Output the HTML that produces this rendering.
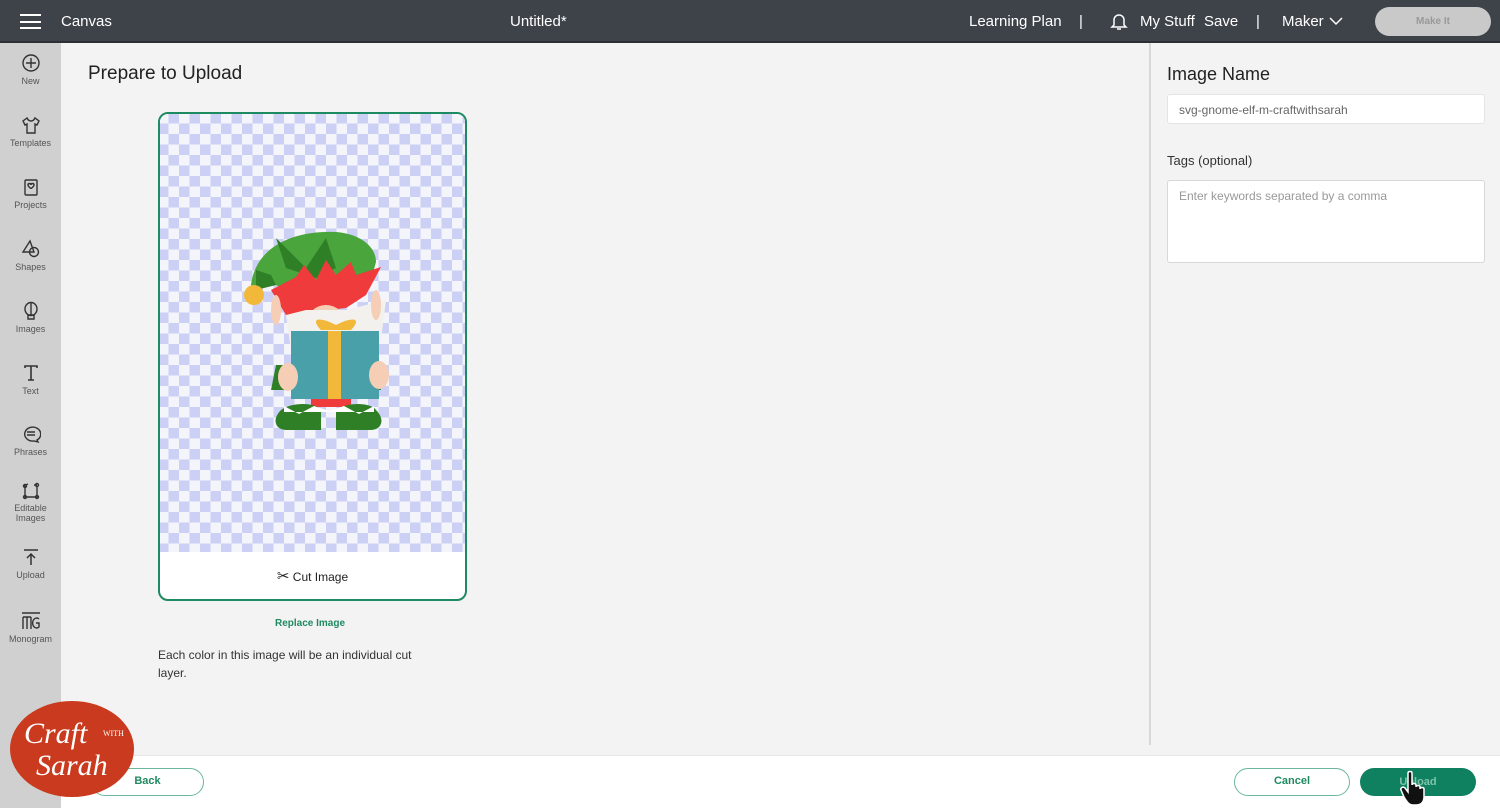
<!DOCTYPE html>
<html><head><meta charset="utf-8"><style>
*{margin:0;padding:0;box-sizing:border-box}
body{width:1500px;height:808px;overflow:hidden;background:#f3f3f3;font-family:"Liberation Sans",sans-serif;position:relative;color:#222}
.top{position:absolute;left:0;top:0;width:1500px;height:43px;background:#3e4249;border-bottom:2px solid #2c2f35;color:#fff;font-size:15px}
.top span{position:absolute;top:13px}
.side{position:absolute;left:0;top:43px;width:61px;height:765px;background:#d0d0d0}
.si{position:absolute;left:0;width:61px;text-align:center;font-size:9px;color:#555}
.si svg{display:block;margin:0 auto 3px}
.right{position:absolute;left:1149px;top:43px;width:351px;height:702px;border-left:2px solid #d8d8d8}
.bottom{position:absolute;left:61px;top:755px;width:1439px;height:53px;background:#fff;border-top:1px solid #e6e6e6}
.btn{position:absolute;height:28px;border-radius:14px;font-size:11px;font-weight:bold;text-align:center;line-height:25px}
</style></head><body>
<div class="top">
<div style="position:absolute;left:20px;top:14px;width:21px;height:15px;border-top:2px solid #fff;border-bottom:2px solid #fff"><div style="margin-top:4.5px;height:2px;background:#fff"></div></div>
<span style="left:61px">Canvas</span>
<span style="left:510px">Untitled*</span>
<span style="left:969px">Learning Plan</span>
<span style="left:1079px">|</span>
<svg style="position:absolute;left:1110px;top:12px" width="18" height="19" viewBox="0 0 18 19" fill="none" stroke="#fff" stroke-width="1.5"><path d="M4 13V8a5 5 0 0 1 10 0v5l2 2H2z"/><path d="M7 17h4"/></svg>
<span style="left:1140px">My Stuff</span>
<span style="left:1204px">Save</span>
<span style="left:1256px">|</span>
<span style="left:1282px">Maker</span>
<svg style="position:absolute;left:1329px;top:17px" width="14" height="9" viewBox="0 0 14 9" fill="none" stroke="#fff" stroke-width="1.5"><path d="M1 1l6 6 6-6"/></svg>
<div style="position:absolute;left:1375px;top:7px;width:116px;height:29px;border-radius:15px;background:#c9c9c9;color:#999;font-size:10px;font-weight:bold;text-align:center;line-height:29px">Make It</div>
</div>
<div class="side">
<div class="si" style="top:10px"><svg width="20" height="20" viewBox="0 0 20 20" fill="none" stroke="#333" stroke-width="1.4"><circle cx="10" cy="10" r="8"/><path d="M10 5v10M5 10h10"/></svg>New</div>
<div class="si" style="top:72px"><svg width="20" height="20" viewBox="0 0 20 20" fill="none" stroke="#333" stroke-width="1.4"><path d="M6 3l-4 3 2 4 2-1v9h8V9l2 1 2-4-4-3c-1 2-2 3-4 3S7 5 6 3z"/></svg>Templates</div>
<div class="si" style="top:134px"><svg width="20" height="20" viewBox="0 0 20 20" fill="none" stroke="#333" stroke-width="1.4"><rect x="4" y="3" width="12" height="15" rx="1"/><path d="M7 8c0-2 3-2 3 0 0-2 3-2 3 0 0 2-3 3-3 4-0-1-3-2-3-4z"/></svg>Projects</div>
<div class="si" style="top:196px"><svg width="20" height="20" viewBox="0 0 20 20" fill="none" stroke="#333" stroke-width="1.4"><path d="M9 2L2 13h11z"/><circle cx="13" cy="13" r="4.5"/></svg>Shapes</div>
<div class="si" style="top:258px"><svg width="20" height="20" viewBox="0 0 20 20" fill="none" stroke="#333" stroke-width="1.4"><ellipse cx="10" cy="8" rx="6" ry="6.5"/><path d="M10 1.5v13M7 14h6v4H7z"/></svg>Images</div>
<div class="si" style="top:320px"><svg width="20" height="20" viewBox="0 0 20 20" fill="none" stroke="#333" stroke-width="1.6"><path d="M4 5V3h12v2M10 3v14M7 17h6"/></svg>Text</div>
<div class="si" style="top:381px"><svg width="20" height="20" viewBox="0 0 20 20" fill="none" stroke="#333" stroke-width="1.4"><path d="M16 16l1 2-4-1A8 7 0 1 1 16 16z"/><path d="M6 8h8M6 11h8"/></svg>Phrases</div>
<div class="si" style="top:437px"><svg width="20" height="20" viewBox="0 0 20 20" fill="none" stroke="#333" stroke-width="1.4"><path d="M4 6v11h12V6M2 6l5-2M13 5h3"/><circle cx="4" cy="6" r="1.5"/><circle cx="16" cy="5" r="1.5"/><circle cx="4" cy="17" r="1.5"/><circle cx="16" cy="17" r="1.5"/></svg>Editable<br>Images</div>
<div class="si" style="top:504px"><svg width="20" height="20" viewBox="0 0 20 20" fill="none" stroke="#333" stroke-width="1.5"><path d="M3 3h14M10 18V7M6 11l4-4 4 4"/></svg>Upload</div>
<div class="si" style="top:568px"><svg width="22" height="20" viewBox="0 0 22 20" fill="none" stroke="#333" stroke-width="1.4"><path d="M2 2h18M3 18V6M7 18V6M11 18V6M3 6h8M19 8a4 5 0 1 0 0 8v-4h-3"/></svg>Monogram</div>
</div>

<div style="position:absolute;left:88px;top:63px;font-size:19px;color:#222">Prepare to Upload</div>
<div style="position:absolute;left:158px;top:112px;width:309px;height:489px;border:2px solid #1e8a62;border-radius:10px;background:#fff;overflow:hidden">
<div style="position:absolute;left:0;top:0;width:305px;height:438px;background-color:#f4f4fb;background-image:conic-gradient(#ccd0f4 25%,transparent 0 50%,#ccd0f4 0 75%,transparent 0);background-size:21px 21px;background-position:-2px -1px"></div>
<svg style="position:absolute;left:76px;top:116px" width="160" height="210" viewBox="0 0 160 210">
<path d="M15 55C20 15 60 0 100 2c25 2 40 15 40 30L135 50 60 65 30 50 20 60z" fill="#4aa53d"/>
<path d="M40 8l30 30 20-30 10 30-20 10-30-10zM20 40l15 5 5 10-20 5z" fill="#2f7f27"/>
<circle cx="18" cy="65" r="10" fill="#f1b83a"/>
<path d="M48 55L55 67 35 60 55 90 80 70 70 55z" fill="#ef3b3b"/>
<path d="M35 60L60 47 68 35 80 50 90 30 100 45 115 32 120 45 145 37 130 65 110 78 50 85z" fill="#ef3b3b"/>
<ellipse cx="90" cy="95" rx="20" ry="20" fill="#f6cdb5"/>
<path d="M50 85l20-5 40 0 40-10-5 40-40 20-50-10z" fill="#f3f1ee"/>
<ellipse cx="40" cy="80" rx="5" ry="15" fill="#f6cdb5"/><ellipse cx="140" cy="75" rx="5" ry="15" fill="#f6cdb5"/>
<path d="M40 135h20l5 25H35zM120 135h20l5 25h-30z" fill="#2f7f27"/>
<rect x="55" y="101" width="88" height="68" fill="#4aa0a8"/>
<rect x="92" y="101" width="13" height="68" fill="#f1b83a"/>
<path d="M85 100c-10-10-5-15 15-5 20-10 25-5 15 5z" fill="#f1b83a"/>
<ellipse cx="52" cy="147" rx="10" ry="14" fill="#f6cdb5"/><ellipse cx="143" cy="145" rx="10" ry="14" fill="#f6cdb5"/>
<rect x="75" y="169" width="40" height="8" fill="#ef3b3b"/>
<path d="M45 180c10-8 35-8 40 0v20H50c-10 0-15-10-5-20zM100 180c10-8 35-8 40 0 10 10 5 20-5 20h-35z" fill="#2f7f27"/>
<path d="M48 176l15 8 15-8 15 5 15-5 15 8 15-8v6H48z" fill="#fff"/>
</svg>
<div style="position:absolute;left:0;top:438px;width:305px;height:49px;text-align:center;line-height:49px;font-size:12px;color:#222"><span style="font-size:15px">✂</span> Cut Image</div>
</div>
<div style="position:absolute;left:275px;top:618px;font-size:10px;font-weight:bold;color:#1e8a62">Replace Image</div>
<div style="position:absolute;left:158px;top:646px;width:285px;font-size:12px;line-height:18px;color:#333">Each color in this image will be an individual cut layer.</div>

<div class="right">
<div style="position:absolute;left:16px;top:21px;font-size:18px;color:#222">Image Name</div>
<div style="position:absolute;left:16px;top:51px;width:318px;height:30px;background:#fff;border:1px solid #e4e4e4;border-radius:3px;font-size:12px;color:#666;padding:8px 11px">svg-gnome-elf-m-craftwithsarah</div>
<div style="position:absolute;left:16px;top:110px;font-size:13px;color:#333">Tags (optional)</div>
<div style="position:absolute;left:16px;top:137px;width:318px;height:83px;background:#fff;border:1px solid #d8d8d8;border-radius:3px;font-size:12px;color:#999;padding:8px 11px">Enter keywords separated by a comma</div>
</div>

<div class="bottom">
<div class="btn" style="left:30px;top:12px;width:113px;border:1.5px solid #6bb79b;color:#1e8a62">Back</div>
<div class="btn" style="left:1173px;top:12px;width:116px;border:1.5px solid #6bb79b;color:#1e8a62">Cancel</div>
<div class="btn" style="left:1299px;top:12px;width:116px;background:#0f8060;color:#7fc4a8;line-height:28px">Upload</div>
</div>
<svg style="position:absolute;left:1400px;top:770px" width="26" height="36" viewBox="0 0 26 36"><path d="M8 3c0-2 4-2 4 0v12c0-2 4-2 4 0v2c0-2 4-2 4 0v2c0-2 4-2 4 0v8c0 5-3 8-8 8h-3c-4 0-6-3-9-8L1 20c-1-2 2-4 4-2l3 4z" fill="#111" stroke="#fff" stroke-width="1.5"/></svg>

<div style="position:absolute;left:10px;top:701px;width:124px;height:96px;border-radius:50%;background:#c93a1e;color:#fff;font-family:'Liberation Serif',serif;font-style:italic;text-align:center">
<div style="position:absolute;left:14px;top:16px;font-size:30px">Craft</div>
<div style="position:absolute;left:93px;top:28px;font-size:8px;font-style:normal">WITH</div>
<div style="position:absolute;left:26px;top:48px;font-size:30px">Sarah</div>
</div>
</body></html>
